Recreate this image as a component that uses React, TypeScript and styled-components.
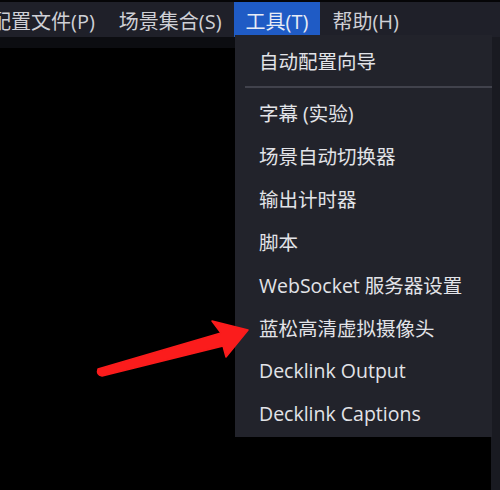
import React from "react";
import styled, { createGlobalStyle } from "styled-components";

const Global = createGlobalStyle`
  html, body { margin: 0; padding: 0; background: #000; }
  body { font-family: "Open Sans", "Noto Sans CJK SC", sans-serif; }
`;

const Screen = styled.div`
  position: relative;
  width: 500px;
  height: 490px;
  overflow: hidden;
  background: #000;
  display: flex;
  flex-direction: column;
`;

const TopEdge = styled.div`
  height: 2px;
  background: #050507;
`;

const MenuBar = styled.div`
  height: 35px;
  background: #1f2029;
  display: flex;
  align-items: stretch;
`;

const BarItem = styled.div<{ $active?: boolean; $offset?: number }>`
  display: flex;
  align-items: center;
  padding: 1px 12px 0;
  margin-left: ${(p) => p.$offset ?? 0}px;
  font-size: 20px;
  color: ${(p) => (p.$active ? "#e8ecf5" : "#cfd0d6")};
  background: ${(p) => (p.$active ? "#1f5bc5" : "transparent")};
  white-space: nowrap;
`;

const Body = styled.div`
  flex: 1;
  display: flex;
`;

const Canvas = styled.div`
  flex: 1;
  display: flex;
  flex-direction: column;
`;

const Strip = styled.div`
  height: 11px;
  background: #0c0d11;
`;

const Side = styled.div`
  width: 9px;
  background: #191a21;
`;

const Dropdown = styled.div`
  position: absolute;
  left: 235px;
  top: 35px;
  width: 257px;
  padding: 4px 0 2px;
  background: #22232b;
  display: flex;
  flex-direction: column;
`;

const Item = styled.div`
  height: 43px;
  display: flex;
  align-items: center;
  padding-left: 24px;
  font-size: 19.5px;
  color: #e2e3e8;
  white-space: nowrap;
`;

const Separator = styled.div`
  height: 9px;
  display: flex;
  align-items: center;
  padding-left: 10px;
  &::after {
    content: "";
    flex: 1;
    height: 2px;
    background: #41424c;
  }
`;

const Arrow = styled.svg`
  position: absolute;
  left: 0;
  top: 0;
  pointer-events: none;
`;

const items = [
  "字幕 (实验)",
  "场景自动切换器",
  "输出计时器",
  "脚本",
  "WebSocket 服务器设置",
  "蓝松高清虚拟摄像头",
  "Decklink Output",
  "Decklink Captions",
];

export default function App() {
  return (
    <>
      <Global />
      <Screen>
        <TopEdge />
        <MenuBar>
          <BarItem $offset={-21}>配置文件(P)</BarItem>
          <BarItem>场景集合(S)</BarItem>
          <BarItem $active>工具(T)</BarItem>
          <BarItem>帮助(H)</BarItem>
        </MenuBar>
        <Body>
          <Canvas>
            <Strip />
          </Canvas>
          <Side />
        </Body>
        <Dropdown>
          <Item>自动配置向导</Item>
          <Separator />
          {items.map((t) => (
            <Item key={t}>{t}</Item>
          ))}
        </Dropdown>
        <Arrow width="500" height="490" viewBox="0 0 500 490">
          <path
            d="M98 369 L221 333 L212 321 L248 330 L226 357 L223 346 L102 376 Q96 375 98 369 Z"
            fill="#fb1c1c"
            stroke="#fb1c1c"
            strokeWidth="1.5"
            strokeLinejoin="round"
          />
        </Arrow>
      </Screen>
    </>
  );
}
